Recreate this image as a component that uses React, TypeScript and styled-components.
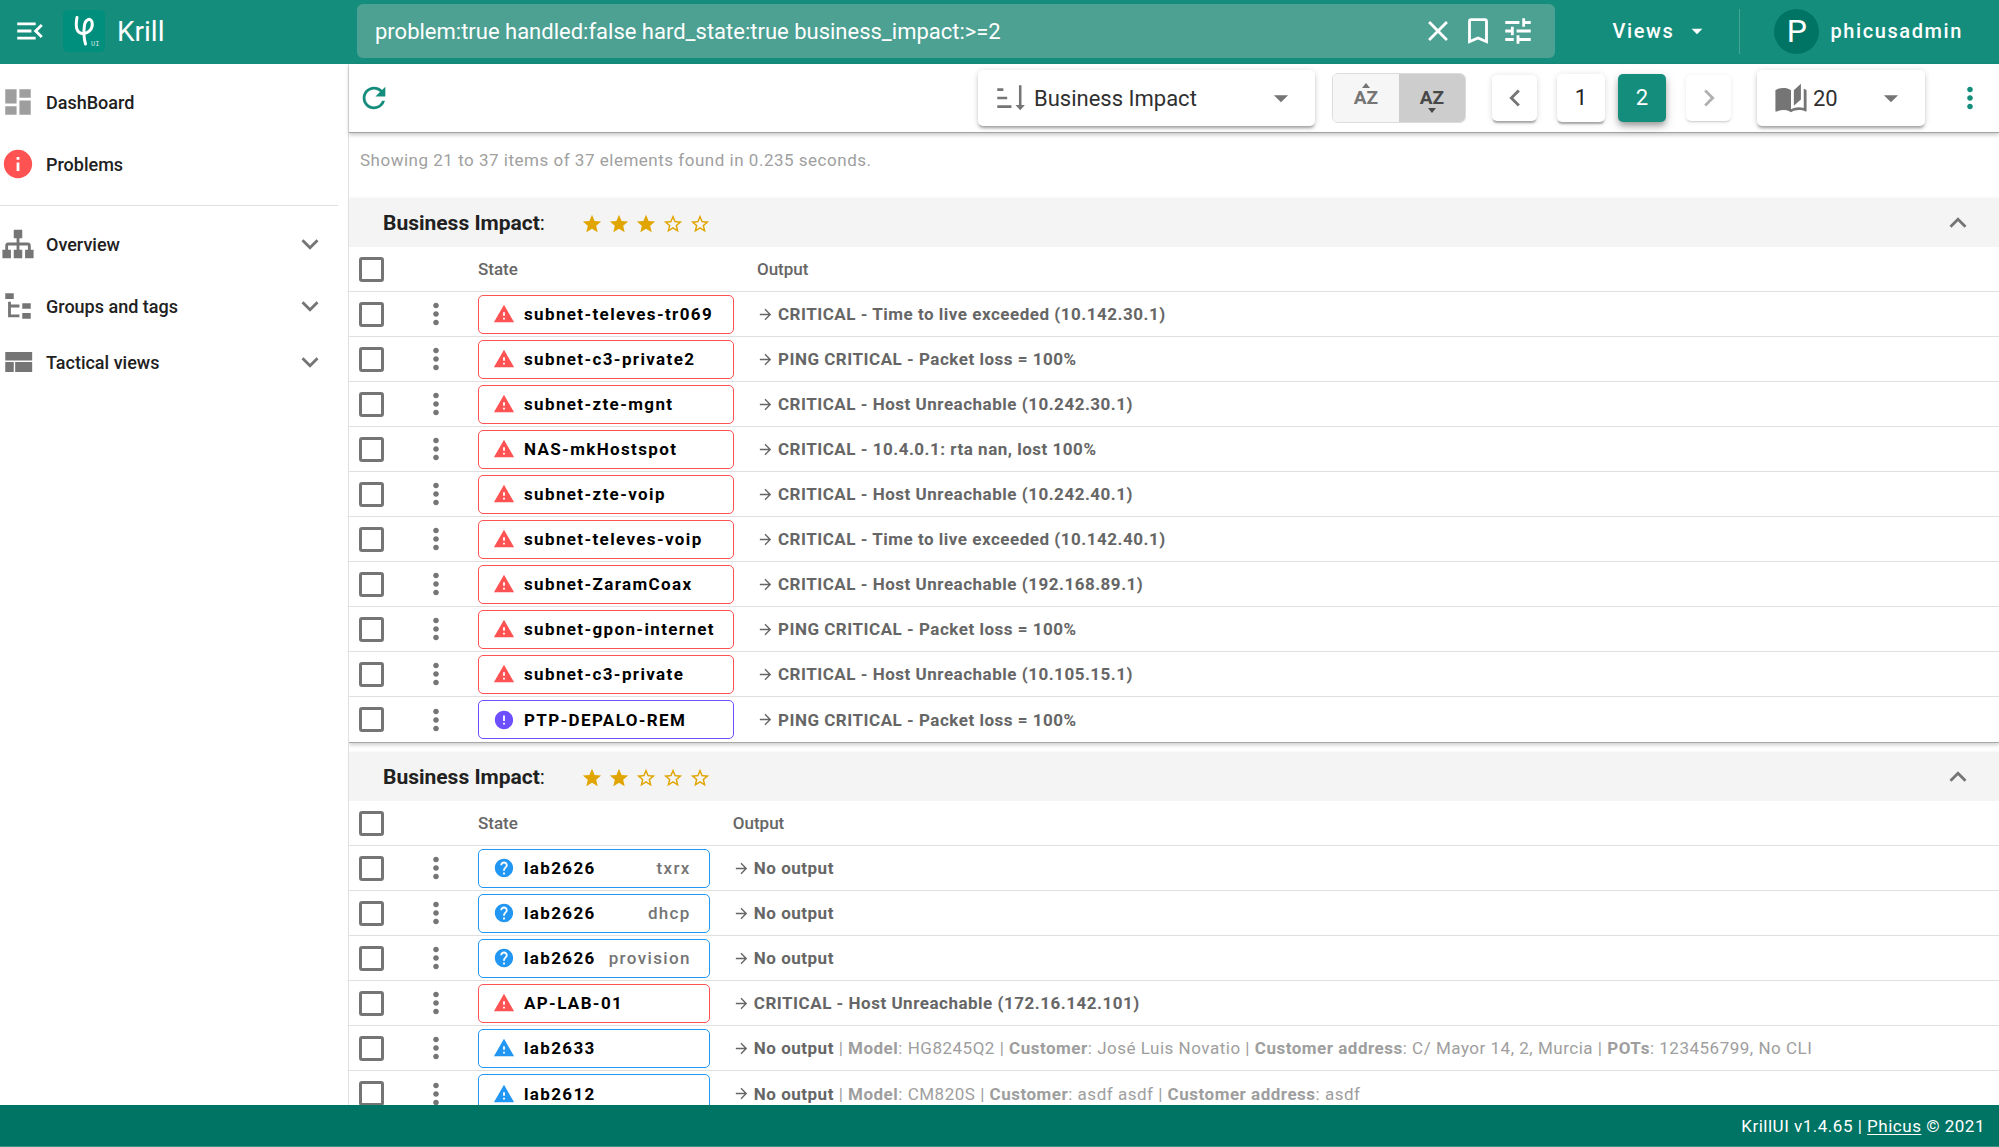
import React from "react";
import styled, { createGlobalStyle, css } from "styled-components";
import {
  MdArrowDropDown,
  MdArrowForward,
  MdBookmarkBorder,
  MdChevronLeft,
  MdChevronRight,
  MdClose,
  MdDashboard,
  MdError,
  MdExpandLess,
  MdExpandMore,
  MdHelp,
  MdInfo,
  MdMoreVert,
  MdRefresh,
  MdStar,
  MdStarBorder,
  MdTune,
  MdWarning,
} from "react-icons/md";

const color = {
  primary: "#158d7d",
  primaryDark: "#007464",
  logo: "#008f7d",
  grey: "#757575",
  text: "#212121",
  line: "#e0e0e0",
  critical: "#ff5252",
  unreachable: "#6e4fff",
  info: "#2196f3",
  star: "#e0a500",
};

const GlobalStyle = createGlobalStyle`
  *, *::before, *::after { box-sizing: border-box; }
  body {
    margin: 0;
    font-family: Roboto, "Noto Sans", sans-serif;
    color: ${color.text};
    background: #fff;
  }
  button, input, select { font: inherit; color: inherit; letter-spacing: inherit; }
  button { cursor: pointer; }
  svg { display: block; flex: none; }
`;

const paths = {
  menuOpen:
    "M21,15.61L19.59,17L14.58,12L19.59,7L21,8.39L17.44,12L21,15.61M3,6H16V8H3V6M3,13V11H13V13H3M3,18V16H16V18H3Z",
  sitemap:
    "M9,2V8H11V11H5C3.89,11 3,11.89 3,13V16H1V22H7V16H5V13H11V16H9V22H15V16H13V13H19V16H17V22H23V16H21V13C21,11.89 20.11,11 19,11H13V8H15V2H9Z",
  fileTree:
    "M3,3H9V7H3V3M15,10H21V14H15V10M15,17H21V21H15V17M13,13H7V18H13V20H7L5,20V9H7V11H13V13Z",
  viewCompact: "M3,19H9V12H3V19M10,19H22V12H10V19M3,5V11H22V5H3Z",
  book: "M19 2L14 6.5V17.5L19 13V2M6.5 5C4.55 5 2.45 5.4 1 6.5V21.16C1 21.41 1.25 21.66 1.5 21.66C1.6 21.66 1.65 21.59 1.75 21.59C3.1 20.94 5.05 20.5 6.5 20.5C8.45 20.5 10.55 20.9 12 22C13.35 21.15 15.8 20.5 17.5 20.5C19.15 20.5 20.85 20.81 22.25 21.56C22.35 21.61 22.4 21.59 22.5 21.59C22.75 21.59 23 21.34 23 21.09V6.5C22.4 6.05 21.75 5.75 21 5.5V19C19.9 18.65 18.7 18.5 17.5 18.5C15.8 18.5 13.35 19.15 12 20V6.5C10.55 5.4 8.45 5 6.5 5Z",
  sort: "M1.6,5.2h4.3v1.8h-4.3zM1.6,11.1h7v1.8h-7zM1.6,17.2h10v1.8h-10zM16.9,3h1.8v14h2.4l-3.3,3.7l-3.3,-3.7h2.4z",
};

const Glyph = ({ name, size }: { name: keyof typeof paths; size: number }) => (
  <svg width={size} height={size} viewBox="0 0 24 24" fill="currentColor" aria-hidden>
    <path d={paths[name]} />
  </svg>
);

/* ---------- frame ---------- */

const Page = styled.div`
  height: 100vh;
  display: flex;
  flex-direction: column;
`;

const Header = styled.header`
  flex: none;
  height: 64px;
  padding: 0 36px 2px 13px;
  display: grid;
  grid-template-columns: 344px minmax(0, 1fr) 408px;
  align-items: center;
  background: ${color.primary};
  color: #fff;
`;

const Body = styled.div`
  flex: 1;
  min-height: 0;
  display: grid;
  grid-template-columns: 349px minmax(0, 1fr);
`;

const Footer = styled.footer`
  flex: none;
  height: 42px;
  padding: 0 14px;
  display: flex;
  align-items: center;
  justify-content: flex-end;
  background: ${color.primaryDark};
  border-bottom: 1px solid #3c9184;
  color: #fff;
  font-size: 17px;
  letter-spacing: 0.03em;
  white-space: pre;

  a { color: inherit; text-underline-offset: 2px; }
`;

const IconButton = styled.button`
  border: 0;
  padding: 0;
  background: none;
  display: flex;
  align-items: center;
  justify-content: center;
`;

/* ---------- header ---------- */

const Brand = styled.div`
  display: flex;
  align-items: center;
  font-size: 28px;

  h1 { margin: 0 0 0 12px; font: inherit; }
`;

const Logo = styled.span`
  width: 42px;
  height: 42px;
  margin-left: 16px;
  border-radius: 5px;
  background: ${color.logo};
`;

const SearchBox = styled.form`
  height: 54px;
  padding: 0 20px 0 18px;
  display: flex;
  align-items: center;
  gap: 7px;
  border-radius: 6px;
  background: #4ca193;
`;

const SearchInput = styled.input`
  flex: 1;
  min-width: 0;
  border: 0;
  padding: 0;
  outline: 0;
  background: none;
  font-size: 22px;
`;

const SearchActions = styled.div`
  display: flex;
  gap: 6px;
`;

const Account = styled.div`
  display: flex;
  align-items: center;
  justify-content: flex-end;
  font-size: 20px;
  font-weight: 500;
  letter-spacing: 0.08em;
`;

const TextButton = styled(IconButton)<{ $gap: number }>`
  gap: ${(p) => p.$gap}px;
`;

const HeaderRule = styled.span`
  width: 1px;
  height: 45px;
  margin: 0 34px 0 29px;
  background: #43a497;
`;

const Avatar = styled.span`
  width: 45px;
  height: 45px;
  border-radius: 50%;
  display: grid;
  place-items: center;
  background: ${color.primaryDark};
  font-size: 32px;
  font-weight: 400;
  letter-spacing: 0;
`;

/* ---------- sidebar ---------- */

const Sidebar = styled.nav`
  padding-top: 10px;
  border-right: 1px solid ${color.line};
`;

const NavList = styled.ul`
  margin: 0;
  padding: 0;
  list-style: none;
`;

const NavRule = styled.hr`
  margin: 13px 10px 10px 0;
  border: 0;
  border-top: 1px solid ${color.line};
`;

const NavItem = styled.li<{ $tight?: boolean }>`
  margin-bottom: ${(p) => (p.$tight ? 0 : 6)}px;
`;

const navRow = css`
  width: 100%;
  height: 56px;
  padding: 0 21px 0 1px;
  display: flex;
  align-items: center;
  gap: 11px;
  font-size: 18px;
  font-weight: 500;
  color: ${color.text};
  text-decoration: none;
`;

const NavLink = styled.a`${navRow}`;

const NavToggle = styled.button`
  ${navRow}
  border: 0;
  background: none;
  text-align: left;
`;

const NavText = styled.span`
  flex: 1;
`;

const NavIcon = styled.span<{ $color?: string }>`
  color: ${(p) => p.$color ?? color.grey};
`;

/* ---------- toolbar ---------- */

const Main = styled.main`
  display: flex;
  flex-direction: column;
  min-height: 0;
`;

const Toolbar = styled.div`
  position: relative;
  flex: none;
  height: 69px;
  padding: 0 12px 1px 8px;
  display: flex;
  align-items: center;
  justify-content: space-between;
  background: #fff;
  border-bottom: 1px solid #a3a3a3;
  box-shadow: 0 2px 4px rgba(0, 0, 0, 0.22);
`;

const Controls = styled.div`
  display: flex;
  align-items: center;
`;

const SelectBox = styled.label<{ $width: number }>`
  width: ${(p) => p.$width}px;
  height: 56px;
  padding: 0 17px;
  display: flex;
  align-items: center;
  gap: 5px;
  border-radius: 5px;
  background: #fff;
  box-shadow: 0 3px 3px -1px rgba(0, 0, 0, 0.3), 0 1px 6px rgba(0, 0, 0, 0.16);
  color: ${color.grey};
`;

const Select = styled.select`
  flex: 1;
  min-width: 0;
  border: 0;
  padding: 2px 0 0;
  outline: 0;
  appearance: none;
  background: none;
  font-size: 22px;
  color: #303030;
`;

const SortToggle = styled.div`
  margin: 0 26px 0 17px;
  display: flex;
  border: 1px solid #dcdcdc;
  border-radius: 6px;
  overflow: hidden;
`;

const SortButton = styled.button<{ $active?: boolean }>`
  width: 66px;
  height: 48px;
  padding: 0;
  border: 0;
  display: flex;
  flex-direction: column;
  align-items: center;
  justify-content: center;
  gap: 2px;
  background: ${(p) => (p.$active ? "#cdcdcd" : "#f6f6f6")};
  color: ${(p) => (p.$active ? "#484848" : "#757575")};
  font-size: 19px;
  font-weight: 700;
  line-height: 16px;
`;

const Caret = styled.i<{ $up?: boolean; $hidden?: boolean }>`
  border: 4px solid transparent;
  border-top: ${(p) => (p.$up ? "0" : "5px solid currentColor")};
  border-bottom: ${(p) => (p.$up ? "5px solid currentColor" : "0")};
  visibility: ${(p) => (p.$hidden ? "hidden" : "visible")};
`;

const Pager = styled.div`
  margin-right: 26px;
  display: flex;
  align-items: center;
  gap: 20px;
`;

const PageNumbers = styled.div`
  display: flex;
  gap: 13px;
`;

const PageButton = styled.button<{ $active?: boolean; $arrow?: boolean }>`
  width: ${(p) => (p.$arrow ? 45 : 48)}px;
  height: ${(p) => (p.$arrow ? 46 : 48)}px;
  padding: 0;
  border: 0;
  border-radius: 5px;
  display: grid;
  place-items: center;
  font-size: 22px;
  background: ${(p) => (p.$active ? color.primary : "#fff")};
  color: ${(p) => (p.$active ? "#fff" : p.$arrow ? color.grey : color.text)};
  box-shadow: ${(p) =>
    p.$active
      ? "0 4px 6px -1px rgba(0,0,0,.32), 0 4px 12px rgba(0,0,0,.16)"
      : "0 3px 2px -1px rgba(0,0,0,.3), 0 1px 6px rgba(0,0,0,.14)"};

  &:disabled {
    color: #b0b0b0;
    box-shadow: 0 2px 2px -1px rgba(0, 0, 0, 0.16), 0 1px 5px rgba(0, 0, 0, 0.08);
  }
`;

const RefreshButton = styled(IconButton)`
  color: ${color.primary};
`;

const MoreButton = styled(IconButton)`
  margin-left: 28px;
  color: ${color.primary};
`;

/* ---------- results ---------- */

const Results = styled.div`
  flex: 1;
  min-height: 0;
  overflow-y: auto;
  scrollbar-width: none;
`;

const Summary = styled.p`
  margin: 0;
  height: 65px;
  padding: 15px 11px 0;
  font-size: 17px;
  line-height: 24px;
  letter-spacing: 0.03em;
  color: #a0a0a0;
`;

const Group = styled.section`
  margin-bottom: 9px;
  border-bottom: 1px solid #a8a8a8;
  box-shadow: 0 2px 4px rgba(0, 0, 0, 0.2);
`;

const GroupHeader = styled.header`
  height: 49px;
  padding: 0 24px 0 34px;
  display: flex;
  align-items: center;
  background: #f4f4f4;
  color: ${color.grey};

  h2 {
    margin: 0 36px 0 0;
    font-size: 21px;
    font-weight: 400;
    color: ${color.text};
  }
  b { font-weight: 700; }
`;

const Stars = styled.div`
  flex: 1;
  padding-top: 2px;
  display: flex;
  gap: 5px;
  color: ${color.star};
`;

const Table = styled.table`
  width: 100%;
  border-collapse: separate;
  border-spacing: 0;
  color: #666;

  th, td {
    height: 45px;
    padding: 0;
    border-bottom: 1px solid ${color.line};
    text-align: left;
    white-space: nowrap;
  }
  tbody tr:last-child td { border-bottom: 0; }
  th { font-size: 17px; font-weight: 500; }
`;

const CheckCell = styled.td`
  width: 70px;

  input { margin-left: 10px; }
`;

const MenuCell = styled.td`
  width: 59px;
  color: ${color.grey};
`;

const StateCell = styled.td`
  width: 1px;
`;

const OutputCell = styled.td`
  && { padding-left: 23px; }
`;

const Checkbox = styled.input.attrs({ type: "checkbox" })`
  display: block;
  width: 25px;
  height: 25px;
  margin: 0;
  appearance: none;
  border: 3px solid ${color.grey};
  border-radius: 3px;

  &:checked { background: ${color.primary}; }
`;

const StateButton = styled.button<{ $color: string }>`
  width: 100%;
  height: 39px;
  padding: 0 18px 0 14px;
  display: flex;
  align-items: center;
  gap: 9px;
  border: 1px solid ${(p) => p.$color};
  border-radius: 5px;
  background: #fff;
  font-size: 17px;
  font-weight: 700;
  letter-spacing: 0.08em;
  color: #000;

  svg { color: ${(p) => p.$color}; }
`;

const Service = styled.span`
  margin-left: auto;
  padding-left: 4px;
  font-weight: 500;
  color: ${color.grey};
`;

const Output = styled.div`
  display: flex;
  align-items: center;
  gap: 4px;
  font-size: 17px;
  letter-spacing: 0.03em;
  white-space: pre;

  b { font-weight: 700; }
`;

const Details = styled.span`
  color: #9e9e9e;
`;

type Kind = "critical" | "unreachable" | "unknown" | "warning";
type Item = {
  kind: Kind;
  host: string;
  service?: string;
  output: string;
  details?: [string, string][];
};

const kinds = {
  critical: { color: color.critical, Icon: MdWarning },
  unreachable: { color: color.unreachable, Icon: MdError },
  unknown: { color: color.info, Icon: MdHelp },
  warning: { color: color.info, Icon: MdWarning },
};

const groups: { impact: number; items: Item[] }[] = [
  {
    impact: 3,
    items: [
      { kind: "critical", host: "subnet-televes-tr069", output: "CRITICAL - Time to live exceeded (10.142.30.1)" },
      { kind: "critical", host: "subnet-c3-private2", output: "PING CRITICAL - Packet loss = 100%" },
      { kind: "critical", host: "subnet-zte-mgnt", output: "CRITICAL - Host Unreachable (10.242.30.1)" },
      { kind: "critical", host: "NAS-mkHostspot", output: "CRITICAL - 10.4.0.1: rta nan, lost 100%" },
      { kind: "critical", host: "subnet-zte-voip", output: "CRITICAL - Host Unreachable (10.242.40.1)" },
      { kind: "critical", host: "subnet-televes-voip", output: "CRITICAL - Time to live exceeded (10.142.40.1)" },
      { kind: "critical", host: "subnet-ZaramCoax", output: "CRITICAL - Host Unreachable (192.168.89.1)" },
      { kind: "critical", host: "subnet-gpon-internet", output: "PING CRITICAL - Packet loss = 100%" },
      { kind: "critical", host: "subnet-c3-private", output: "CRITICAL - Host Unreachable (10.105.15.1)" },
      { kind: "unreachable", host: "PTP-DEPALO-REM", output: "PING CRITICAL - Packet loss = 100%" },
    ],
  },
  {
    impact: 2,
    items: [
      { kind: "unknown", host: "lab2626", service: "txrx", output: "No output" },
      { kind: "unknown", host: "lab2626", service: "dhcp", output: "No output" },
      { kind: "unknown", host: "lab2626", service: "provision", output: "No output" },
      { kind: "critical", host: "AP-LAB-01", output: "CRITICAL - Host Unreachable (172.16.142.101)" },
      {
        kind: "warning",
        host: "lab2633",
        output: "No output",
        details: [
          ["Model", "HG8245Q2"],
          ["Customer", "José Luis Novatio"],
          ["Customer address", "C/ Mayor 14, 2, Murcia"],
          ["POTs", "123456799, No CLI"],
        ],
      },
      {
        kind: "warning",
        host: "lab2612",
        output: "No output",
        details: [
          ["Model", "CM820S"],
          ["Customer", "asdf asdf"],
          ["Customer address", "asdf"],
        ],
      },
    ],
  },
];

const ItemRow = ({ item }: { item: Item }) => {
  const { color: tone, Icon } = kinds[item.kind];
  return (
    <tr>
      <CheckCell>
        <Checkbox aria-label={`Select ${item.host} ${item.service ?? ""}`} />
      </CheckCell>
      <MenuCell>
        <IconButton aria-label={`Actions for ${item.host}`}>
          <MdMoreVert size={34} />
        </IconButton>
      </MenuCell>
      <StateCell>
        <StateButton $color={tone}>
          <Icon size={22} />
          <span>{item.host}</span>
          {item.service && <Service>{item.service}</Service>}
        </StateButton>
      </StateCell>
      <OutputCell>
        <Output>
          <MdArrowForward size={17} />
          <span>
            <b>{item.output}</b>
            {item.details && (
              <Details>
                {item.details.map(([label, value]) => (
                  <React.Fragment key={label}>
                    {" | "}
                    <b>{label}</b>: {value}
                  </React.Fragment>
                ))}
              </Details>
            )}
          </span>
        </Output>
      </OutputCell>
    </tr>
  );
};

const ImpactGroup = ({ impact, items }: { impact: number; items: Item[] }) => (
  <Group>
    <GroupHeader>
      <h2>
        <b>Business Impact</b>:
      </h2>
      <Stars role="img" aria-label={`${impact} of 5`}>
        {[1, 2, 3, 4, 5].map((n) =>
          n <= impact ? <MdStar key={n} size={22} /> : <MdStarBorder key={n} size={22} />
        )}
      </Stars>
      <IconButton aria-label="Collapse group">
        <MdExpandLess size={34} />
      </IconButton>
    </GroupHeader>
    <Table>
      <thead>
        <tr>
          <CheckCell as="th">
            <Checkbox aria-label="Select all" />
          </CheckCell>
          <MenuCell />
          <StateCell as="th">State</StateCell>
          <OutputCell as="th">Output</OutputCell>
        </tr>
      </thead>
      <tbody>
        {items.map((item, i) => (
          <ItemRow key={i} item={item} />
        ))}
      </tbody>
    </Table>
  </Group>
);

export default function App() {
  return (
    <Page>
      <GlobalStyle />
      <Header>
        <Brand>
          <IconButton aria-label="Toggle menu">
            <Glyph name="menuOpen" size={34} />
          </IconButton>
          <Logo>
            <svg width="42" height="42" viewBox="0 0 42 42" aria-hidden>
              <path
                d="M14 7.5C12.5 16 13 22.5 19 23.5C25 24 30.5 19 29 12C27.5 7.5 22.5 9 21.5 15C20.5 22 21 29 22.5 34"
                fill="none"
                stroke="#fff"
                strokeWidth="3"
                strokeLinecap="round"
              />
              <text x="28" y="36" fontFamily="Liberation Mono, monospace" fontSize="7" fill="#cfe8e4">
                UI
              </text>
            </svg>
          </Logo>
          <h1>Krill</h1>
        </Brand>
        <SearchBox onSubmit={(e) => e.preventDefault()}>
          <SearchInput
            aria-label="Search"
            defaultValue="problem:true handled:false hard_state:true business_impact:>=2"
          />
          <SearchActions>
            <IconButton type="button" aria-label="Clear">
              <MdClose size={34} />
            </IconButton>
            <IconButton type="button" aria-label="Bookmark">
              <MdBookmarkBorder size={34} />
            </IconButton>
            <IconButton type="button" aria-label="Filters">
              <MdTune size={34} />
            </IconButton>
          </SearchActions>
        </SearchBox>
        <Account>
          <TextButton $gap={10}>
            Views
            <MdArrowDropDown size={26} />
          </TextButton>
          <HeaderRule />
          <TextButton $gap={11}>
            <Avatar>P</Avatar>
            phicusadmin
          </TextButton>
        </Account>
      </Header>

      <Body>
        <Sidebar>
          <NavList>
            <NavItem>
              <NavLink href="#dashboard">
                <NavIcon $color="#9e9e9e"><MdDashboard size={34} /></NavIcon>
                <NavText>DashBoard</NavText>
              </NavLink>
            </NavItem>
            <NavItem>
              <NavLink href="#problems">
                <NavIcon $color={color.critical}><MdInfo size={34} /></NavIcon>
                <NavText>Problems</NavText>
              </NavLink>
            </NavItem>
          </NavList>
          <NavRule />
          <NavList>
            <NavItem>
              <NavToggle>
                <NavIcon><Glyph name="sitemap" size={34} /></NavIcon>
                <NavText>Overview</NavText>
                <NavIcon><MdExpandMore size={34} /></NavIcon>
              </NavToggle>
            </NavItem>
            <NavItem $tight>
              <NavToggle>
                <NavIcon><Glyph name="fileTree" size={34} /></NavIcon>
                <NavText>Groups and tags</NavText>
                <NavIcon><MdExpandMore size={34} /></NavIcon>
              </NavToggle>
            </NavItem>
            <NavItem>
              <NavToggle>
                <NavIcon><Glyph name="viewCompact" size={34} /></NavIcon>
                <NavText>Tactical views</NavText>
                <NavIcon><MdExpandMore size={34} /></NavIcon>
              </NavToggle>
            </NavItem>
          </NavList>
        </Sidebar>

        <Main>
          <Toolbar>
            <RefreshButton aria-label="Refresh">
              <MdRefresh size={34} />
            </RefreshButton>
            <Controls>
              <SelectBox $width={337}>
                <Glyph name="sort" size={34} />
                <Select aria-label="Sort by">
                  <option>Business Impact</option>
                </Select>
                <MdArrowDropDown size={34} />
              </SelectBox>
              <SortToggle>
                <SortButton aria-label="AZ ascending">
                  <Caret $up />
                  AZ
                  <Caret $hidden />
                </SortButton>
                <SortButton $active aria-label="AZ descending">
                  <Caret $up $hidden />
                  AZ
                  <Caret />
                </SortButton>
              </SortToggle>
              <Pager>
                <PageButton $arrow aria-label="Previous page">
                  <MdChevronLeft size={34} />
                </PageButton>
                <PageNumbers>
                  <PageButton>1</PageButton>
                  <PageButton $active>2</PageButton>
                </PageNumbers>
                <PageButton $arrow disabled aria-label="Next page">
                  <MdChevronRight size={34} />
                </PageButton>
              </Pager>
              <SelectBox $width={168}>
                <Glyph name="book" size={34} />
                <Select aria-label="Items per page">
                  <option>20</option>
                </Select>
                <MdArrowDropDown size={34} />
              </SelectBox>
              <MoreButton aria-label="More options">
                <MdMoreVert size={34} />
              </MoreButton>
            </Controls>
          </Toolbar>
          <Results>
            <Summary>Showing 21 to 37 items of 37 elements found in 0.235 seconds.</Summary>
            {groups.map((group) => (
              <ImpactGroup key={group.impact} {...group} />
            ))}
          </Results>
        </Main>
      </Body>

      <Footer>
        KrillUI v1.4.65 | <a href="#phicus">Phicus</a> © 2021
      </Footer>
    </Page>
  );
}
